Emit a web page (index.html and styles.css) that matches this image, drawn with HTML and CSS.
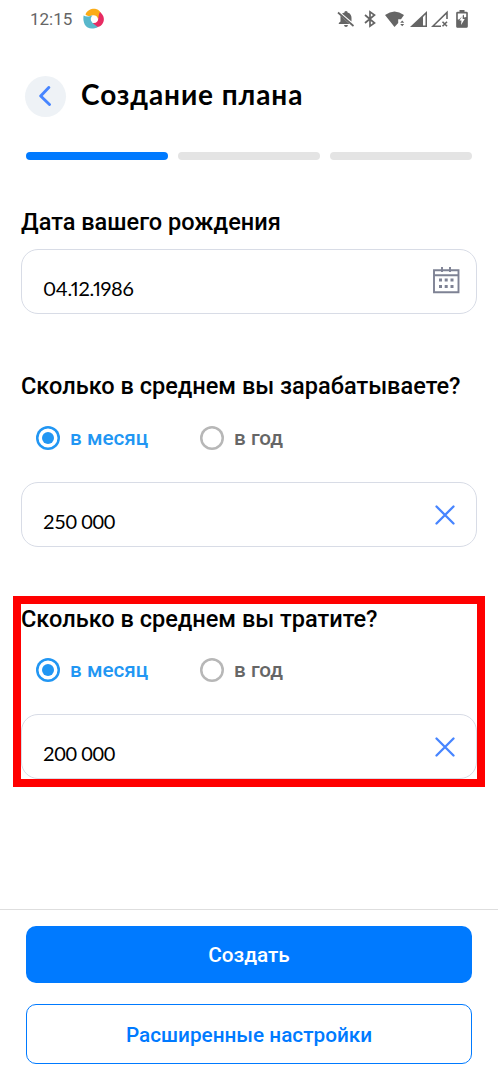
FILE: index.html
```html
<!DOCTYPE html>
<html lang="ru">
<head>
<meta charset="utf-8">
<meta name="viewport" content="width=device-width">
<title>Создание плана</title>
<link rel="stylesheet" href="styles.css">
</head>
<body>
<div class="screen">
  <div class="status">
    <span class="clock">12:15</span>
    <svg class="app-logo" width="22" height="22" viewBox="0 0 22 22">
      <path fill="#fbac18" d="M2.500 6.500C4 2 9 .3 13 1c3 .6 5 3 5.500 6.500L15 11C14.500 8 12 6.500 8.500 7.500 6 8.500 4 8 2.500 6.500Z"/>
      <path fill="#e72b62" d="M17 4c4.500 3.500 5 9 2 12.500-3 3.500-8 3.500-12 .5l3.500-2c3 .2 4.500-1.500 4.800-4.500C15.500 8 16 5.500 17 4Z"/>
      <path fill="#58b8cc" d="M.6 7.500C3 9 5.500 9 9.500 7.300 7.500 9.500 7 12 9 14.300c1.500 1.700 3.300 3 6 4.700C9 22 4 20.500 1.700 16.500.4 13.500 0 10.500.6 7.500Z"/>
    </svg>
    <div class="indicators">
      <svg width="18" height="18" viewBox="0 0 18 18">
        <path fill="#656565" d="M5 3.500 7.500 2.400V1.800q1.500-1.600 3 0v.6C13.500 3.200 14.500 5.500 14.500 8v3.500ZM3.500 5.500 12.500 14H1.800v-1L3.500 11.500ZM7 15h4q-.3 2-2 2T7 15Z"/>
        <path stroke="#656565" stroke-width="1.700" d="m1 2.500 15.500 13.500"/>
      </svg>
      <svg width="12" height="18" viewBox="0 0 12 18">
        <path fill="none" stroke="#656565" stroke-width="1.700" d="m1 5 9.500 8L6 16.200V1.800L10.500 5 1 13"/>
      </svg>
      <svg width="20" height="18" viewBox="0 0 20 18">
        <path fill="#656565" d="M0 5Q9.500-2 19 5l-3 4.200h-2.800V13L9.500 17Z"/>
        <path fill="#656565" d="m17.200 10.500 2 2.200h-4Zm-2 3.600h4l-2 2.200Z"/>
      </svg>
      <svg width="17" height="18" viewBox="0 0 17 18">
        <path fill="#656565" fill-rule="evenodd" d="M17 1v16H0Zm-1.500 3.500L13 7v8.500h2.500Z"/>
      </svg>
      <svg width="17" height="18" viewBox="0 0 17 18">
        <path fill="none" stroke="#656565" stroke-width="1.600" d="M16 9V2.500L1.800 16.300H10m1.500-4.600 4.500 4.600m0-4.600-4.500 4.600"/>
      </svg>
      <svg width="12" height="18" viewBox="0 0 12 18">
        <rect x="3.500" width="5" height="3" fill="#656565"/>
        <rect x=".8" y="2.300" width="10.400" height="14.900" rx=".8" fill="#656565" stroke="#656565" stroke-width="1.200"/>
        <path fill="#fff" d="M1.800 3.500h8.400V7l-2.200.5L8 4.500 3 9.500H1.800ZM6.700 5.500 3.500 10.500h2L5 15l3.700-6h-2Z"/>
      </svg>
    </div>
  </div>

  <header class="header">
    <button class="back" aria-label="Назад">
      <svg width="12" height="20" viewBox="0 0 12 20"><path fill="none" stroke="#4785ff" stroke-width="2.900" stroke-linecap="round" stroke-linejoin="round" d="M9.800 1.500 1.700 10l8.800 8.500"/></svg>
    </button>
    <h1 class="title">Создание плана</h1>
  </header>

  <div class="steps"><i class="step active"></i><i class="step"></i><i class="step"></i></div>

  <section class="group birth">
    <h2 class="question">Дата вашего рождения</h2>
    <div class="field">
      <span class="value date">04.12.1986</span>
      <svg class="calendar" width="28" height="28" viewBox="0 0 28 28">
        <path fill="none" stroke="#7e8294" stroke-width="1.900" d="M2 4.200h24.500v22H2ZM2 9.300h24.500M10 1v5m8-5v5"/>
        <path fill="#7e8294" d="M7 12.500h3v3H7Zm5.700 0h3v3h-3Zm5.800 0h3v3h-3ZM7 19h3v3H7Zm5.700 0h3v3h-3Zm5.800 0h3v3h-3Z"/>
      </svg>
    </div>
  </section>

  <section class="group income">
    <h2 class="question">Сколько в среднем вы зарабатываете?</h2>
    <div class="options">
      <div class="option selected"><i class="radio"></i><span>в месяц</span></div>
      <div class="option"><i class="radio"></i><span>в год</span></div>
    </div>
    <div class="field">
      <span class="value">250 000</span>
      <svg class="clear" width="20" height="20" viewBox="0 0 20 20"><path stroke="#4785ff" stroke-width="2.300" stroke-linecap="round" d="m1.500 1.500 17 17m0-17-17 17"/></svg>
    </div>
  </section>

  <section class="group spending">
    <h2 class="question">Сколько в среднем вы тратите?</h2>
    <div class="options">
      <div class="option selected"><i class="radio"></i><span>в месяц</span></div>
      <div class="option"><i class="radio"></i><span>в год</span></div>
    </div>
    <div class="field">
      <span class="value">200 000</span>
      <svg class="clear" width="20" height="20" viewBox="0 0 20 20"><path stroke="#4785ff" stroke-width="2.300" stroke-linecap="round" d="m1.500 1.500 17 17m0-17-17 17"/></svg>
    </div>
  </section>

  <footer class="actions">
    <button class="button primary">Создать</button>
    <button class="button outline">Расширенные настройки</button>
  </footer>
</div>
</body>
</html>
```
FILE: styles.css
```css
* { box-sizing: border-box; }
body { margin: 0; background: #fff; color: #000; font-family: Roboto, "Noto Sans", sans-serif; }
h1, h2 { margin: 0; }
button { font: inherit; cursor: pointer; }
svg { display: block; flex: none; }

.screen { width: 498px; height: 1080px; display: flex; flex-direction: column; overflow: hidden; }

.status { height: 38px; padding: 0 30px; display: flex; align-items: center; flex: none; }
.clock { width: 43px; font-size: 17px; line-height: 20px; color: #656565; white-space: nowrap; }
.app-logo { margin-left: 10px; }
.indicators { display: flex; align-items: center; margin-left: auto; gap: 4px; }
.indicators svg:nth-child(1) { margin-right: 5px; }
.indicators svg:nth-child(2) { margin-right: 5px; }
.indicators svg:nth-child(3) { margin-right: 1px; }
.indicators svg:nth-child(5) { margin-right: 4px; }

.header { height: 42px; margin-top: 37px; padding-left: 25px; display: flex; align-items: center; flex: none; }
.back { width: 41px; height: 41px; border: 0; border-radius: 50%; padding: 0 1px 0 0; background: #eef2f6; display: flex; align-items: center; justify-content: center; }
.title { margin: -4px 0 0 15px; font: 700 28px/36px Lato, "Noto Sans", sans-serif; letter-spacing: .9px; white-space: nowrap; }

.steps { display: flex; gap: 10px; margin-top: 35px; padding: 0 26px; flex: none; }
.step { flex: 1; height: 8px; border-radius: 4px; background: #e4e4e4; }
.step.active { background: #007aff; }

.group { padding: 0 21px; flex: none; }
.birth { margin-top: 47px; }
.income { margin-top: 57px; }
.spending { margin: 49px 13px 0 13px; width: 472px; height: 191px; padding: 0; border: 8px solid #f00; }
.question { height: 30px; font-size: 23.55px; font-weight: 500; line-height: 30px; white-space: nowrap; }
.field { height: 65px; border: 1px solid #d8dce6; border-radius: 17px; padding: 0 16px 0 21px; display: flex; justify-content: space-between; }
.birth .field { margin-top: 12px; }
.value { padding-top: 25px; font: 400 20px/26px Lato, "Noto Sans", sans-serif; letter-spacing: -.4px; white-space: nowrap; }
.value.date { letter-spacing: -.35px; font-feature-settings: "pnum"; }
.calendar { margin-top: 16px; }
.clear { margin: 22px 5px 0 0; }

.options { display: flex; margin-top: 24px; padding-left: 15px; height: 25px; }
.option { width: 164px; display: flex; align-items: center; font-size: 20.7px; font-weight: 500; color: #666; white-space: nowrap; }
.radio { width: 24px; height: 24px; margin-right: 10px; box-shadow: inset 0 0 0 2.500px #b7b7b7; border-radius: 50%; display: flex; align-items: center; justify-content: center; flex: none; }
.selected { color: #2196f3; }
.selected .radio { box-shadow: inset 0 0 0 2.500px #2196f3; }
.selected .radio::after { content: ""; width: 12px; height: 12px; border-radius: 50%; background: #2196f3; }
.options + .field { margin-top: 32px; }
.spending .question { height: 30px; line-height: 30px; }
.spending .options { margin-top: 23px; }
.spending .field { width: 456px; }

.actions { margin-top: auto; height: 171px; border-top: 1px solid #dedede; padding: 16px 26px 0; display: flex; flex-direction: column; gap: 21px; flex: none; }
.button { border-radius: 10px; font-size: 20.75px; font-weight: 500; padding: 0; }
.primary { height: 57px; border: 0; background: #007aff; color: #fff; }
.outline { height: 60px; border: 1px solid #007aff; padding-top: 1px; background: #fff; color: #007aff; }
```
